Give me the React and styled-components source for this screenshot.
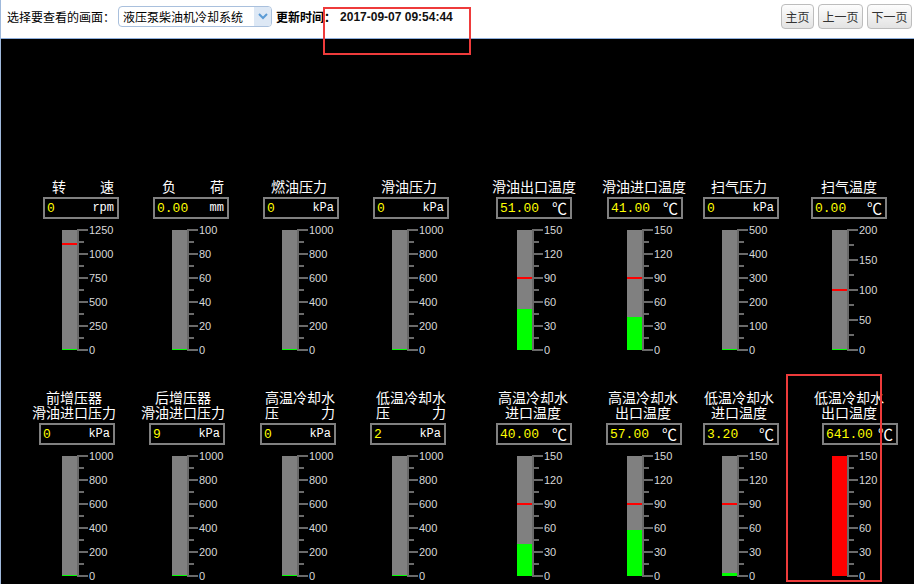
import React from "react";
import styled, { createGlobalStyle } from "styled-components";

const GlobalStyle = createGlobalStyle`
  html, body {
    margin: 0;
    padding: 0;
    background: #000;
  }
  body {
    font-family: "Noto Sans CJK SC", "Noto Sans", sans-serif;
  }
`;

const Screen = styled.div`
  height: 100vh;
  overflow: hidden;
  border-left: 1px solid #9fb9dc;
  background: #000;
  display: flex;
  flex-direction: column;
`;

const TopBar = styled.header`
  height: 33px;
  padding: 0 2px 5px 6px;
  background: #fff;
  border-bottom: 1px solid #8eaedb;
  display: flex;
  align-items: center;
  font-size: 12px;
  color: #000;
`;

const PickLabel = styled.span`
  white-space: nowrap;
`;

const Select = styled.div`
  margin-left: 3px;
  width: 154px;
  height: 21px;
  box-sizing: border-box;
  border: 1px solid #a9c0dd;
  border-radius: 4px;
  display: flex;
  overflow: hidden;
`;

const SelectText = styled.span`
  flex: 1;
  padding-left: 4px;
  line-height: 19px;
  white-space: nowrap;
`;

const SelectArrow = styled.span`
  width: 17px;
  background: #dde8f5;
  display: flex;
  align-items: center;
  justify-content: center;
`;

const UpdateLabel = styled.span`
  margin-left: 4px;
  font-weight: bold;
  white-space: nowrap;
`;

const TimeText = styled.span`
  position: relative;
  margin-left: 4px;
  font-family: "Liberation Sans", Arial, sans-serif;
  font-weight: bold;
  font-size: 12px;
  line-height: 14px;
  color: #111;
  &::after {
    content: "";
    position: absolute;
    left: -17px;
    top: -3px;
    width: 148px;
    height: 48px;
    box-sizing: border-box;
    border: 2px solid #ee3b3b;
  }
`;

const NavGroup = styled.div`
  margin-left: auto;
  display: flex;
  gap: 4px;
`;

const NavButton = styled.button`
  height: 25px;
  padding: 0 3.5px;
  font-family: "Noto Sans CJK SC", sans-serif;
  font-size: 12px;
  color: #333;
  border: 1px solid #bdbdbd;
  border-radius: 4px;
  background: linear-gradient(#fdfdfd, #e3e3e3);
  cursor: pointer;
`;

const Panel = styled.main`
  flex: 1;
  background: #000;
  padding: 140px 0 0 42px;
`;

const GaugeRow = styled.div`
  display: grid;
  grid-template-columns: 110px 110px 110px 125px 110px 95px 110px 90px;
  & + & {
    margin-top: 40px;
  }
`;

const Cell = styled.div`
  position: relative;
  width: 76px;
  display: flex;
  flex-direction: column;
  &::before {
    content: "";
    display: ${(p) => (p.$highlight ? "block" : "none")};
    position: absolute;
    left: -27px;
    top: -16px;
    width: 96px;
    height: 208px;
    box-sizing: border-box;
    border: 2px solid #ee3b3b;
  }
`;

const TitleBlock = styled.div`
  align-self: flex-start;
  width: 76px;
  margin-left: ${(p) => p.$shift}px;
  display: flex;
  flex-direction: column;
  align-items: center;
`;

const TitleLine = styled.div`
  white-space: nowrap;
  font-size: 14px;
  line-height: 15px;
  color: #fff;
  display: flex;
  justify-content: space-between;
  width: ${(p) => (p.$spread ? `${p.$spread}px` : "auto")};
`;

const ValueBox = styled.div`
  align-self: flex-start;
  margin: 3px 0 0 ${(p) => p.$shift}px;
  width: 76px;
  height: 22px;
  box-sizing: border-box;
  border: 2px solid #808080;
  padding: 0 3px 0 2px;
  display: flex;
  align-items: center;
  justify-content: space-between;
`;

const Value = styled.span`
  font-family: "Liberation Mono", monospace;
  font-size: 13px;
  color: #ffff00;
`;

const Unit = styled.span`
  font-family: ${(p) =>
    p.$temp ? '"Noto Sans CJK SC", sans-serif' : '"Liberation Mono", monospace'};
  font-size: ${(p) => (p.$temp ? "15px" : "12px")};
  line-height: 16px;
  color: #fff;
`;

const GaugeBody = styled.div`
  align-self: flex-start;
  margin: 11px 0 0 19px;
  display: flex;
`;

const Bar = styled.div`
  position: relative;
  width: 15px;
  height: 120px;
  background: #808080;
`;

const Fill = styled.div`
  position: absolute;
  left: 0;
  right: 0;
  bottom: 0;
  background: ${(p) => (p.$over ? "#ff0000" : "#00ff00")};
`;

const Marker = styled.div`
  position: absolute;
  left: 0;
  right: 0;
  height: 2px;
  background: #ff0000;
`;

const ScaleSvg = styled.svg`
  overflow: visible;
  display: block;
`;

function Scale({ max, div }) {
  const steps = div * 2;
  const items = [];
  for (let i = 0; i <= steps; i++) {
    const y = 120 - (i * 120) / steps;
    const major = i % 2 === 0;
    items.push(
      <rect key={"t" + i} x={2} y={y - 1} width={major ? 9 : 5} height={2} fill="#6a6a6a" />
    );
    if (major) {
      items.push(
        <text
          key={"l" + i}
          x={12}
          y={y}
          dominantBaseline="central"
          fontFamily="'Liberation Sans', Arial, sans-serif"
          fontSize="11"
          fill="#d8d8d8"
        >
          {(max * i) / steps}
        </text>
      );
    }
  }
  return (
    <ScaleSvg width="48" height="120">
      <rect x={0} y={-1} width={2} height={122} fill="#6a6a6a" />
      {items}
    </ScaleSvg>
  );
}

function Gauge({ g }) {
  const over = g.v >= g.max;
  const h = over ? 120 : Math.max(1, Math.round((g.v / g.max) * 120));
  const temp = g.unit === "℃";
  return (
    <Cell $highlight={g.highlight}>
      <TitleBlock $shift={g.tshift ?? -2}>
        {g.title.map((line, i) =>
          Array.isArray(line) ? (
            <TitleLine key={i} $spread={g.spread}>
              <span>{line[0]}</span>
              <span>{line[1]}</span>
            </TitleLine>
          ) : (
            <TitleLine key={i}>{line}</TitleLine>
          )
        )}
      </TitleBlock>
      <ValueBox $shift={g.shift || 0}>
        <Value>{g.value}</Value>
        <Unit $temp={temp}>{g.unit}</Unit>
      </ValueBox>
      <GaugeBody>
        <Bar>
          <Fill $over={over} style={{ height: h }} />
          {g.alarm && !over ? (
            <Marker style={{ top: 120 - (g.alarm / g.max) * 120 - 1 }} />
          ) : null}
        </Bar>
        <Scale max={g.max} div={g.div || 5} />
      </GaugeBody>
    </Cell>
  );
}

const rowOne = [
  { title: [["转", "速"]], spread: 62, tshift: 2, value: "0", unit: "rpm", max: 1250, alarm: 1100, v: 0 },
  { title: [["负", "荷"]], spread: 62, tshift: 2, value: "0.00", unit: "mm", max: 100, v: 0 },
  { title: ["燃油压力"], value: "0", unit: "kPa", max: 1000, v: 0 },
  { title: ["滑油压力"], value: "0", unit: "kPa", max: 1000, v: 0 },
  { title: ["滑油出口温度"], value: "51.00", unit: "℃", max: 150, alarm: 90, v: 51, shift: -2 },
  { title: ["滑油进口温度"], value: "41.00", unit: "℃", max: 150, alarm: 90, v: 41, shift: -1 },
  { title: ["扫气压力"], value: "0", unit: "kPa", max: 500, v: 0 },
  { title: ["扫气温度"], value: "0.00", unit: "℃", max: 200, div: 4, alarm: 100, v: 0, shift: -2 },
];

const rowTwo = [
  { title: ["前增压器", "滑油进口压力"], tshift: -7, value: "0", unit: "kPa", max: 1000, v: 0, shift: -4 },
  { title: ["后增压器", "滑油进口压力"], tshift: -8, value: "9", unit: "kPa", max: 1000, v: 9, shift: -4 },
  { title: ["高温冷却水", ["压", "力"]], spread: 70, tshift: -1, value: "0", unit: "kPa", max: 1000, v: 0, shift: -3 },
  { title: ["低温冷却水", ["压", "力"]], spread: 70, tshift: 0, value: "2", unit: "kPa", max: 1000, v: 2, shift: -3 },
  { title: ["高温冷却水", "进口温度"], tshift: -3, value: "40.00", unit: "℃", max: 150, alarm: 90, v: 40, shift: -2 },
  { title: ["高温冷却水", "出口温度"], tshift: -3, value: "57.00", unit: "℃", max: 150, alarm: 90, v: 57, shift: -2 },
  { title: ["低温冷却水", "进口温度"], tshift: -2, value: "3.20", unit: "℃", max: 150, alarm: 90, v: 3.2 },
  { title: ["低温冷却水", "出口温度"], tshift: -2, value: "641.00", unit: "℃", max: 150, alarm: 90, v: 641, shift: 9, highlight: true },
];

export default function App() {
  return (
    <Screen>
      <GlobalStyle />
      <TopBar>
        <PickLabel>选择要查看的画面：</PickLabel>
        <Select>
          <SelectText>液压泵柴油机冷却系统</SelectText>
          <SelectArrow>
            <svg width="10" height="7" viewBox="0 0 10 7">
              <polyline points="1,1 5,5 9,1" fill="none" stroke="#5b9bd5" strokeWidth="2" />
            </svg>
          </SelectArrow>
        </Select>
        <UpdateLabel>更新时间：</UpdateLabel>
        <TimeText>2017-09-07 09:54:44</TimeText>
        <NavGroup>
          <NavButton>主页</NavButton>
          <NavButton>上一页</NavButton>
          <NavButton>下一页</NavButton>
        </NavGroup>
      </TopBar>
      <Panel>
        <GaugeRow>
          {rowOne.map((g, i) => (
            <Gauge key={i} g={g} />
          ))}
        </GaugeRow>
        <GaugeRow>
          {rowTwo.map((g, i) => (
            <Gauge key={i} g={g} />
          ))}
        </GaugeRow>
      </Panel>
    </Screen>
  );
}
